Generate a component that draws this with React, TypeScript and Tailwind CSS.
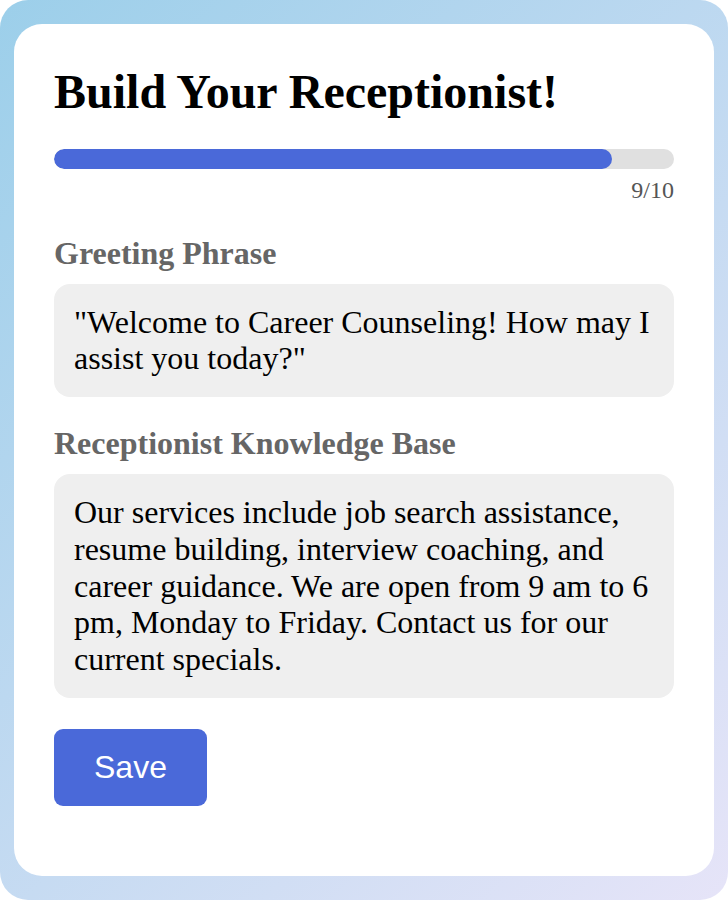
import React from 'react';

const progress = { step: 9, total: 10 };

export default function App() {
  const pct = (progress.step / progress.total) * 100;

  return (
    <div className="w-[728px] h-[900px] rounded-[28px] bg-[linear-gradient(135deg,#9ccfea,#e6e4f8)] px-[14px] py-[24px] font-['Liberation_Serif',serif]">
      <div className="bg-white rounded-[28px] p-[40px] pb-[70px]">
        <h1 className="text-[48px] font-bold leading-[1.15] text-black mb-[30px]">
          Build Your Receptionist!
        </h1>

        {/* progress */}
        <div className="h-[20px] w-full rounded-full bg-[#e0e0e0] overflow-hidden">
          <div className="h-full rounded-full bg-[#4a69d9]" style={{ width: `${pct}%` }} />
        </div>
        <div className="mt-[8px] mb-[30px] text-right text-[24px] leading-[1.15] text-[#555]">
          {progress.step}/{progress.total}
        </div>

        <label className="block text-[32px] font-bold leading-[1.15] text-[#666] mb-[12px]">
          Greeting Phrase
        </label>
        <div className="rounded-[16px] bg-[#efefef] p-[20px] text-[32px] leading-[1.15] text-black mb-[28px]">
          "Welcome to Career Counseling! How may I assist you today?"
        </div>

        <label className="block text-[32px] font-bold leading-[1.15] text-[#666] mb-[12px]">
          Receptionist Knowledge Base
        </label>
        <div className="rounded-[16px] bg-[#efefef] p-[20px] text-[32px] leading-[1.15] text-black mb-[31px]">
          Our services include job search assistance, resume building, interview coaching, and career guidance. We are open from 9 am to 6 pm, Monday to Friday. Contact us for our current specials.
        </div>

        <button className="rounded-[9px] bg-[#4a69d9] px-[40px] py-[20px] text-[32px] leading-[1.15] text-white font-['Liberation_Sans',sans-serif]">
          Save
        </button>
      </div>
    </div>
  );
}
